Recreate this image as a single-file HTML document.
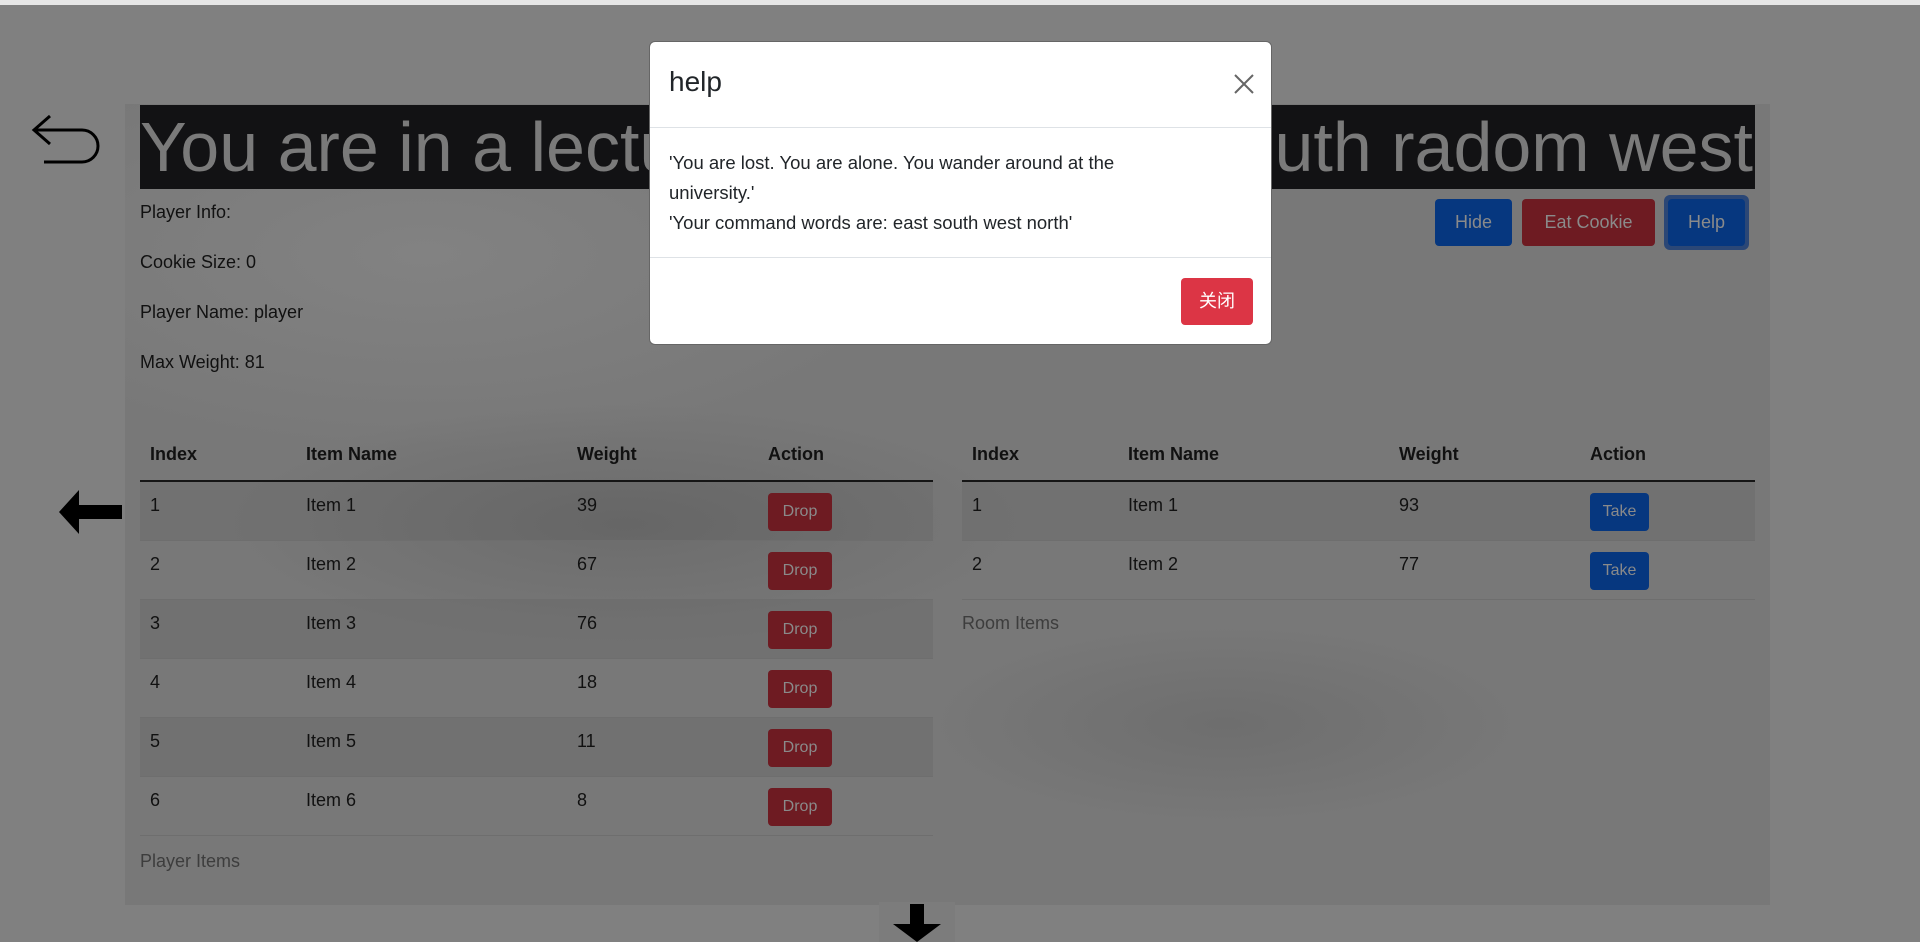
<!DOCTYPE html>
<html><head><meta charset="utf-8"><style>
*{margin:0;padding:0;box-sizing:border-box}
body{width:1920px;height:942px;overflow:hidden;background:#808080;font-family:"Liberation Sans","Noto Sans CJK SC",sans-serif;position:relative;color:#111}
.top{position:absolute;left:0;top:0;width:1920px;height:5px;background:#e6e6e6}
.content{position:absolute;left:125px;top:104px;width:1645px;height:801px;background:
radial-gradient(ellipse 400px 120px at 500px 420px,#6c6c6c,transparent),
radial-gradient(ellipse 300px 100px at 1100px 620px,#6e6e6e,transparent),
radial-gradient(ellipse 500px 200px at 300px 150px,#828282,transparent),
#787878}
.title{position:absolute;left:140px;top:105px;width:1615px;height:84px;background:#121214;overflow:hidden;color:#7a7a7a;font-size:70px;line-height:84px;white-space:nowrap;font-weight:300}
.title .l{position:absolute;left:0;top:0}
.title .r{position:absolute;right:2px;top:0}
.info{position:absolute;left:140px;font-size:18px}
.btn{position:absolute;color:#8a8a8a;font-size:18px;border-radius:4px;text-align:center}
table{position:absolute;border-collapse:collapse;font-size:18px;width:793px}
th{text-align:left;font-weight:bold;height:57px;border-bottom:2px solid #151515;padding-left:10px;padding-top:4px;vertical-align:middle}
td{height:59px;padding-left:10px;border-bottom:1px solid #6e6e6e;vertical-align:top;padding-top:13px}
tr.s td{background:rgba(0,0,0,0.05)}
.sb{display:inline-block;width:64px;height:38px;line-height:38px;text-align:center;border-radius:4px;color:#8a8a8a;font-size:16px;margin-top:-2px}
.cap{position:absolute;font-size:18px;color:#3d3d3d}
.modal{position:absolute;left:649px;top:41px;width:623px;height:304px;background:#fff;border-radius:6px;border:1px solid #666}
</style></head><body>
<div class="top"></div>
<div class="content"></div>
<div class="title"><span class="l">You are in a lecture theatre</span><span class="r">exits: north south radom west</span></div>
<svg style="position:absolute;left:30px;top:114px" width="70" height="50" viewBox="0 0 70 50"><path d="M4 16 H52 a16 16 0 0 1 0 32 H14" fill="none" stroke="#000" stroke-width="3"/><path d="M20 2 L4 16 L20 30" fill="none" stroke="#000" stroke-width="3"/></svg>
<div class="info" style="top:202px">Player Info:</div>
<div class="info" style="top:252px">Cookie Size: 0</div>
<div class="info" style="top:302px">Player Name: player</div>
<div class="info" style="top:352px">Max Weight: 81</div>
<div class="btn" style="left:1435px;top:199px;width:77px;height:47px;line-height:47px;background:#06377f">Hide</div>
<div class="btn" style="left:1522px;top:199px;width:133px;height:47px;line-height:47px;background:#6e1b22">Eat Cookie</div>
<div class="btn" style="left:1664px;top:195px;width:85px;height:55px;border-radius:6px;background:#2b4776"></div>
<div class="btn" style="left:1668px;top:199px;width:77px;height:47px;line-height:47px;background:#06377f">Help</div>
<svg style="position:absolute;left:59px;top:489px" width="64" height="46" viewBox="0 0 64 46"><path d="M0 23 L20 1 L20 16 L63 16 L63 30 L20 30 L20 45 Z" fill="#000"/></svg>
<table style="left:140px;top:424px">
<tr><th style="width:156px">Index</th><th style="width:271px">Item Name</th><th style="width:191px">Weight</th><th>Action</th></tr>
<tr class="s"><td>1</td><td>Item 1</td><td>39</td><td><span class="sb" style="background:#6e1b22">Drop</span></td></tr>
<tr><td>2</td><td>Item 2</td><td>67</td><td><span class="sb" style="background:#6e1b22">Drop</span></td></tr>
<tr class="s"><td>3</td><td>Item 3</td><td>76</td><td><span class="sb" style="background:#6e1b22">Drop</span></td></tr>
<tr><td>4</td><td>Item 4</td><td>18</td><td><span class="sb" style="background:#6e1b22">Drop</span></td></tr>
<tr class="s"><td>5</td><td>Item 5</td><td>11</td><td><span class="sb" style="background:#6e1b22">Drop</span></td></tr>
<tr><td>6</td><td>Item 6</td><td>8</td><td><span class="sb" style="background:#6e1b22">Drop</span></td></tr>
</table>
<div class="cap" style="left:140px;top:851px">Player Items</div>
<table style="left:962px;top:424px">
<tr><th style="width:156px">Index</th><th style="width:271px">Item Name</th><th style="width:191px">Weight</th><th>Action</th></tr>
<tr class="s"><td>1</td><td>Item 1</td><td>93</td><td><span class="sb" style="background:#06377f;width:59px">Take</span></td></tr>
<tr><td>2</td><td>Item 2</td><td>77</td><td><span class="sb" style="background:#06377f;width:59px">Take</span></td></tr>
</table>
<div class="cap" style="left:962px;top:613px">Room Items</div>
<div style="position:absolute;left:879px;top:902px;width:76px;height:40px;background:#7c7c7c"></div>
<svg style="position:absolute;left:891px;top:904px" width="52" height="38" viewBox="0 0 52 38"><path d="M19 0 H33 V20 H50 L26 38 L2 20 H19 Z" fill="#000"/></svg>
<div class="modal">
<div style="position:absolute;left:19px;top:24px;font-size:28px;color:#212529">help</div>
<svg style="position:absolute;left:583px;top:31px" width="22" height="22" viewBox="0 0 22 22"><path d="M2 2 L20 20 M20 2 L2 20" stroke="#666" stroke-width="2"/></svg>
<div style="position:absolute;left:0;top:85px;width:100%;border-top:1px solid #dee2e6"></div>
<div style="position:absolute;left:19px;top:106px;width:490px;font-size:18.5px;line-height:30px;color:#212529">'You are lost. You are alone. You wander around at the university.'<br>'Your command words are: east south west north'</div>
<div style="position:absolute;left:0;top:215px;width:100%;border-top:1px solid #dee2e6"></div>
<div style="position:absolute;left:531px;top:236px;width:72px;height:47px;line-height:47px;background:#dc3545;color:#fff;border-radius:4px;text-align:center;font-size:18px">关闭</div>
</div>
</body></html>
